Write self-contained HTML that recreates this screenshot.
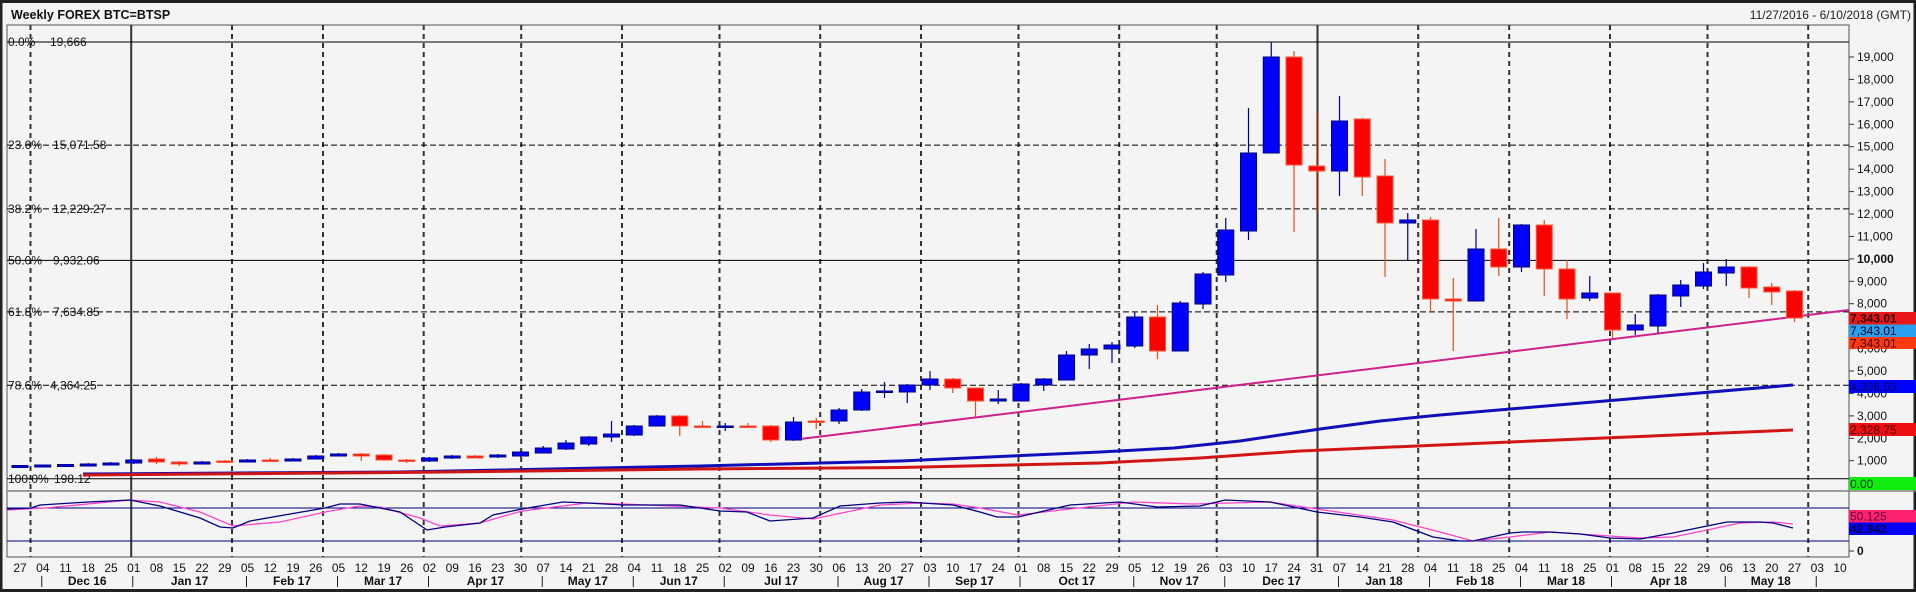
<!DOCTYPE html>
<html><head><meta charset="utf-8"><style>
html,body{margin:0;padding:0;background:#f0f0f0;}
svg{display:block;font-family:"Liberation Sans",sans-serif;}
</style></head><body>
<svg width="1916" height="592" viewBox="0 0 1916 592" xmlns="http://www.w3.org/2000/svg">
<defs><clipPath id="pc"><rect x="7" y="25" width="1842" height="532"/></clipPath></defs>
<rect x="0" y="0" width="1916" height="592" fill="#f4f4f4"/>
<rect x="1" y="1.5" width="1914" height="589" fill="none" stroke="#222" stroke-width="3"/>
<text x="11" y="19" font-size="12.5" font-weight="bold" fill="#111">Weekly FOREX BTC=BTSP</text>
<text x="1911" y="19" font-size="12" fill="#222" text-anchor="end">11/27/2016 - 6/10/2018 (GMT)</text>
<rect x="7" y="25" width="1842" height="532" fill="#f4f4f4" stroke="#555" stroke-width="1"/>
<g clip-path="url(#pc)">
<g stroke="#333" stroke-width="2" stroke-dasharray="5,4">
<line x1="30.5" y1="25" x2="30.5" y2="557"/><line x1="232" y1="25" x2="232" y2="557"/><line x1="323" y1="25" x2="323" y2="557"/><line x1="423.7" y1="25" x2="423.7" y2="557"/><line x1="521.2" y1="25" x2="521.2" y2="557"/><line x1="622" y1="25" x2="622" y2="557"/><line x1="719.5" y1="25" x2="719.5" y2="557"/><line x1="820.2" y1="25" x2="820.2" y2="557"/><line x1="921" y1="25" x2="921" y2="557"/><line x1="1018.5" y1="25" x2="1018.5" y2="557"/><line x1="1119.2" y1="25" x2="1119.2" y2="557"/><line x1="1216.7" y1="25" x2="1216.7" y2="557"/><line x1="1418.2" y1="25" x2="1418.2" y2="557"/><line x1="1509.2" y1="25" x2="1509.2" y2="557"/><line x1="1610" y1="25" x2="1610" y2="557"/><line x1="1707.5" y1="25" x2="1707.5" y2="557"/><line x1="1808.2" y1="25" x2="1808.2" y2="557"/>
</g>
<g stroke="#333" stroke-width="2"><line x1="131.2" y1="25" x2="131.2" y2="557"/><line x1="1317.5" y1="25" x2="1317.5" y2="557"/></g>
<g stroke="#000" stroke-width="1">
<line x1="7" y1="42" x2="1849" y2="42"/><line x1="7" y1="260.4" x2="1849" y2="260.4"/><line x1="7" y1="478.7" x2="1849" y2="478.7"/>
</g>
<g stroke="#000" stroke-width="1" stroke-dasharray="6,3">
<line x1="7" y1="145.1" x2="1849" y2="145.1"/><line x1="7" y1="208.9" x2="1849" y2="208.9"/><line x1="7" y1="311.9" x2="1849" y2="311.9"/><line x1="7" y1="385.2" x2="1849" y2="385.2"/>
</g>
<g font-size="12" fill="#111">
<text x="8" y="46">0.0%</text><text x="50" y="46">19,666</text>
<text x="8" y="149">23.6%</text><text x="53" y="149">15,071.58</text>
<text x="8" y="213">38.2%</text><text x="53" y="213">12,229.27</text>
<text x="8" y="264.5">50.0%</text><text x="53" y="264.5">9,932.06</text>
<text x="8" y="316">61.8%</text><text x="53" y="316">7,634.85</text>
<text x="8" y="389.5">78.6%</text><text x="50" y="389.5">4,364.25</text>
<text x="8" y="483">100.0%</text><text x="54" y="483">198.12</text>
</g>
<line x1="7" y1="491" x2="1849" y2="491" stroke="#808080" stroke-width="1.5"/>
<line x1="7" y1="508" x2="1849" y2="508" stroke="#000080" stroke-width="1"/>
<line x1="7" y1="541" x2="1849" y2="541" stroke="#000080" stroke-width="1"/>
<polyline fill="none" stroke="#1010b8" stroke-width="3" points="83,474 400,472 700,466 900,461 1100,452 1174,448 1240,441 1320,429 1380,421 1440,415 1793,385"/>
<polyline fill="none" stroke="#d01515" stroke-width="3" points="83,475 400,472.5 700,469 900,467.5 1100,463 1200,458 1300,451 1440,445 1793,430"/>
<line x1="792" y1="440" x2="1849" y2="310" stroke="#d0208a" stroke-width="2"/>
<polyline fill="none" stroke="#ff44cc" stroke-width="1.3" points="7,510 45,508 130,500 160,502 200,512 233,526 280,522 330,511 360,506 380,507 420,518 440,526 480,523 522,511 587,503 623,504 720,508 770,515 813,519 880,505 920,503 953,504 980,508 1018,515 1070,509 1133,502 1193,504 1270,502 1317,509 1393,520 1440,532 1473,541 1510,537 1550,532 1580,534 1610,536 1640,538 1673,537 1707,530 1740,523 1773,522 1793,524"/>
<polyline fill="none" stroke="#000080" stroke-width="1.3" points="7,509 31,508 40,505 88,502 130,500 160,506 200,518 220,527 233,528 250,521 290,514 325,508 340,504 360,504 400,512 427,530 445,527 480,523 493,515 522,509 563,502 587,503 623,505 680,505 720,511 747,512 770,521 813,518 840,506 880,503 907,502 953,505 980,512 997,517 1018,517 1070,505 1120,502 1157,507 1200,506 1225,500 1270,502 1317,512 1360,517 1393,522 1433,537 1460,541 1473,541 1510,533 1523,532 1550,532 1580,534 1610,538 1640,539 1673,533 1707,526 1727,522 1760,522 1773,523 1793,528"/>
<g>
<g stroke="#000080" stroke-width="1.2">
<line x1="20" y1="465" x2="20" y2="468"/><line x1="42.75" y1="465" x2="42.75" y2="467"/><line x1="65.5" y1="464" x2="65.5" y2="466"/><line x1="88.25" y1="463" x2="88.25" y2="466"/><line x1="111" y1="462" x2="111" y2="465"/><line x1="133.75" y1="459" x2="133.75" y2="464"/><line x1="202" y1="461" x2="202" y2="464"/><line x1="247.5" y1="459" x2="247.5" y2="462"/><line x1="293" y1="458" x2="293" y2="461"/><line x1="315.75" y1="455" x2="315.75" y2="459"/><line x1="338.5" y1="453" x2="338.5" y2="456"/><line x1="429.5" y1="457" x2="429.5" y2="462"/><line x1="452.25" y1="455" x2="452.25" y2="459"/><line x1="497.75" y1="454" x2="497.75" y2="458"/><line x1="520.5" y1="451" x2="520.5" y2="457"/><line x1="543.25" y1="446" x2="543.25" y2="453"/><line x1="566" y1="440" x2="566" y2="450"/><line x1="588.75" y1="436" x2="588.75" y2="446"/><line x1="611.5" y1="421" x2="611.5" y2="442"/><line x1="634.25" y1="425" x2="634.25" y2="436"/><line x1="657" y1="415" x2="657" y2="426"/><line x1="725.25" y1="423" x2="725.25" y2="431"/><line x1="793.5" y1="417" x2="793.5" y2="440"/><line x1="839" y1="408" x2="839" y2="424"/><line x1="861.75" y1="389" x2="861.75" y2="411"/><line x1="884.5" y1="382" x2="884.5" y2="398"/><line x1="907.25" y1="384" x2="907.25" y2="403"/><line x1="930" y1="371" x2="930" y2="390"/><line x1="998.25" y1="390" x2="998.25" y2="404"/><line x1="1021" y1="383" x2="1021" y2="401"/><line x1="1043.75" y1="378" x2="1043.75" y2="391"/><line x1="1066.5" y1="351" x2="1066.5" y2="380"/><line x1="1089.25" y1="344" x2="1089.25" y2="369"/><line x1="1112" y1="342" x2="1112" y2="363"/><line x1="1134.75" y1="312" x2="1134.75" y2="348"/><line x1="1180.25" y1="301" x2="1180.25" y2="351"/><line x1="1203" y1="272" x2="1203" y2="309"/><line x1="1225.75" y1="218" x2="1225.75" y2="282"/><line x1="1248.5" y1="108" x2="1248.5" y2="240"/><line x1="1271.25" y1="42" x2="1271.25" y2="153"/><line x1="1339.5" y1="96" x2="1339.5" y2="196"/><line x1="1407.75" y1="213" x2="1407.75" y2="260"/><line x1="1476" y1="229" x2="1476" y2="301"/><line x1="1521.5" y1="224" x2="1521.5" y2="272"/><line x1="1589.75" y1="276" x2="1589.75" y2="301"/><line x1="1635.25" y1="314" x2="1635.25" y2="335"/><line x1="1658" y1="294" x2="1658" y2="333"/><line x1="1680.75" y1="280" x2="1680.75" y2="307"/><line x1="1703.5" y1="263" x2="1703.5" y2="289"/><line x1="1726.25" y1="259" x2="1726.25" y2="286"/>
</g>
<g fill="#0000ff" stroke="#000080" stroke-width="1">
<rect x="12" y="465.5" width="16" height="2"/><rect x="34.75" y="465" width="16" height="2"/><rect x="57.5" y="464.5" width="16" height="2"/><rect x="80.25" y="464" width="16" height="2"/><rect x="103" y="463" width="16" height="2"/><rect x="125.75" y="460" width="16" height="3"/><rect x="194" y="462" width="16" height="2"/><rect x="239.5" y="460" width="16" height="2"/><rect x="285" y="459" width="16" height="2"/><rect x="307.75" y="456" width="16" height="3"/><rect x="330.5" y="454" width="16" height="2"/><rect x="421.5" y="458" width="16" height="3"/><rect x="444.25" y="456" width="16" height="2"/><rect x="489.75" y="455" width="16" height="2"/><rect x="512.5" y="452" width="16" height="4"/><rect x="535.25" y="448" width="16" height="5"/><rect x="558" y="443" width="16" height="6"/><rect x="580.75" y="437" width="16" height="7"/><rect x="603.5" y="434" width="16" height="3"/><rect x="626.25" y="426" width="16" height="9"/><rect x="649" y="416" width="16" height="10"/><rect x="717.25" y="426" width="16" height="1.5"/><rect x="785.5" y="422" width="16" height="18"/><rect x="831" y="410" width="16" height="11"/><rect x="853.75" y="392" width="16" height="18"/><rect x="876.5" y="391" width="16" height="1.5"/><rect x="899.25" y="385" width="16" height="7"/><rect x="922" y="379" width="16" height="6"/><rect x="990.25" y="399" width="16" height="2"/><rect x="1013" y="384" width="16" height="17"/><rect x="1035.75" y="379" width="16" height="6"/><rect x="1058.5" y="355" width="16" height="25"/><rect x="1081.25" y="349" width="16" height="6"/><rect x="1104" y="345" width="16" height="4"/><rect x="1126.75" y="317" width="16" height="29"/><rect x="1172.25" y="303" width="16" height="48"/><rect x="1195" y="274" width="16" height="30"/><rect x="1217.75" y="230" width="16" height="45"/><rect x="1240.5" y="153" width="16" height="78"/><rect x="1263.25" y="57" width="16" height="96"/><rect x="1331.5" y="121" width="16" height="50"/><rect x="1399.75" y="220" width="16" height="3"/><rect x="1468" y="249" width="16" height="52"/><rect x="1513.5" y="225" width="16" height="42"/><rect x="1581.75" y="293" width="16" height="5"/><rect x="1627.25" y="325" width="16" height="5"/><rect x="1650" y="295" width="16" height="31"/><rect x="1672.75" y="285" width="16" height="11"/><rect x="1695.5" y="272" width="16" height="14"/><rect x="1718.25" y="267" width="16" height="6"/>
</g>
<g stroke="#e05020" stroke-width="1.2">
<line x1="156.5" y1="457" x2="156.5" y2="464"/><line x1="179.25" y1="461" x2="179.25" y2="466"/><line x1="224.75" y1="460" x2="224.75" y2="463"/><line x1="270.25" y1="458" x2="270.25" y2="462"/><line x1="361.25" y1="453" x2="361.25" y2="461"/><line x1="384" y1="454" x2="384" y2="461"/><line x1="406.75" y1="459" x2="406.75" y2="463"/><line x1="475" y1="455" x2="475" y2="458"/><line x1="679.75" y1="415" x2="679.75" y2="436"/><line x1="702.5" y1="421" x2="702.5" y2="428"/><line x1="748" y1="423" x2="748" y2="427"/><line x1="770.75" y1="425" x2="770.75" y2="442"/><line x1="816.25" y1="418" x2="816.25" y2="429"/><line x1="952.75" y1="378" x2="952.75" y2="393"/><line x1="975.5" y1="388" x2="975.5" y2="417"/><line x1="1157.5" y1="305" x2="1157.5" y2="359"/><line x1="1294" y1="51" x2="1294" y2="232"/><line x1="1316.75" y1="113" x2="1316.75" y2="212"/><line x1="1362.25" y1="118" x2="1362.25" y2="196"/><line x1="1385" y1="159" x2="1385" y2="277"/><line x1="1430.5" y1="217" x2="1430.5" y2="312"/><line x1="1453.25" y1="278" x2="1453.25" y2="351"/><line x1="1498.75" y1="218" x2="1498.75" y2="276"/><line x1="1544.25" y1="220" x2="1544.25" y2="296"/><line x1="1567" y1="260" x2="1567" y2="319"/><line x1="1612.5" y1="293" x2="1612.5" y2="338"/><line x1="1749" y1="266" x2="1749" y2="298"/><line x1="1771.75" y1="283" x2="1771.75" y2="305"/><line x1="1794.5" y1="290" x2="1794.5" y2="322"/>
</g>
<g fill="#ff0000" stroke="#ff5a3a" stroke-width="1">
<rect x="148.5" y="459" width="16" height="3"/><rect x="171.25" y="462" width="16" height="2"/><rect x="216.75" y="461" width="16" height="1.5"/><rect x="262.25" y="460" width="16" height="1.5"/><rect x="353.25" y="454" width="16" height="2"/><rect x="376" y="455" width="16" height="5"/><rect x="398.75" y="460" width="16" height="1.5"/><rect x="467" y="456" width="16" height="2"/><rect x="671.75" y="416" width="16" height="10"/><rect x="694.5" y="426" width="16" height="1.5"/><rect x="740" y="426" width="16" height="1.5"/><rect x="762.75" y="426" width="16" height="14"/><rect x="808.25" y="421" width="16" height="1.5"/><rect x="944.75" y="379" width="16" height="9"/><rect x="967.5" y="388" width="16" height="13"/><rect x="1149.5" y="317" width="16" height="34"/><rect x="1286" y="57" width="16" height="108"/><rect x="1308.75" y="166" width="16" height="5"/><rect x="1354.25" y="119" width="16" height="58"/><rect x="1377" y="176" width="16" height="47"/><rect x="1422.5" y="220" width="16" height="79"/><rect x="1445.25" y="299" width="16" height="2"/><rect x="1490.75" y="249" width="16" height="18"/><rect x="1536.25" y="225" width="16" height="44"/><rect x="1559" y="269" width="16" height="30"/><rect x="1604.5" y="293" width="16" height="37"/><rect x="1741" y="267" width="16" height="21"/><rect x="1763.75" y="287" width="16" height="5"/><rect x="1786.5" y="291" width="16" height="27"/>
</g>
</g>
</g>
<line x1="1849" y1="491" x2="1916" y2="491" stroke="#808080" stroke-width="1.5"/>
<g stroke="#333" stroke-width="1">
<line x1="1849" y1="57" x2="1854" y2="57"/><line x1="1849" y1="79.4" x2="1854" y2="79.4"/><line x1="1849" y1="101.9" x2="1854" y2="101.9"/><line x1="1849" y1="124.3" x2="1854" y2="124.3"/><line x1="1849" y1="146.7" x2="1854" y2="146.7"/><line x1="1849" y1="169.2" x2="1854" y2="169.2"/><line x1="1849" y1="191.6" x2="1854" y2="191.6"/><line x1="1849" y1="214" x2="1854" y2="214"/><line x1="1849" y1="236.4" x2="1854" y2="236.4"/><line x1="1849" y1="258.9" x2="1854" y2="258.9"/><line x1="1849" y1="281.3" x2="1854" y2="281.3"/><line x1="1849" y1="303.7" x2="1854" y2="303.7"/><line x1="1849" y1="326.2" x2="1854" y2="326.2"/><line x1="1849" y1="348.6" x2="1854" y2="348.6"/><line x1="1849" y1="371" x2="1854" y2="371"/><line x1="1849" y1="393.4" x2="1854" y2="393.4"/><line x1="1849" y1="415.9" x2="1854" y2="415.9"/><line x1="1849" y1="438.3" x2="1854" y2="438.3"/><line x1="1849" y1="460.7" x2="1854" y2="460.7"/><line x1="1849" y1="551" x2="1854" y2="551"/>
</g>
<g font-size="12" fill="#111">
<text x="1857" y="61">19,000</text><text x="1857" y="83.4">18,000</text><text x="1857" y="105.9">17,000</text><text x="1857" y="128.3">16,000</text><text x="1857" y="150.7">15,000</text><text x="1857" y="173.2">14,000</text><text x="1857" y="195.6">13,000</text><text x="1857" y="218">12,000</text><text x="1857" y="240.4">11,000</text><text x="1857" y="262.9" font-weight="bold">10,000</text><text x="1857" y="285.3">9,000</text><text x="1857" y="307.7">8,000</text><text x="1857" y="330.2">7,000</text><text x="1857" y="352.6">6,000</text><text x="1857" y="375">5,000</text><text x="1857" y="397.4">4,000</text><text x="1857" y="419.9">3,000</text><text x="1857" y="442.3">2,000</text><text x="1857" y="464.7">1,000</text><text x="1857" y="555" font-weight="bold">0</text>
</g>
<g font-size="12">
<rect x="1849" y="312" width="67" height="12.5" fill="#e81818"/><text x="1850" y="322.5" fill="#300" font-weight="bold">7,343.01</text>
<rect x="1849" y="324.5" width="67" height="12.5" fill="#2aa0f0"/><text x="1850" y="335" fill="#002">7,343.01</text>
<rect x="1849" y="337" width="67" height="12" fill="#ff3a10"/><text x="1850" y="347.5" fill="#300">7,343.01</text>
<rect x="1849" y="380" width="67" height="13" fill="#0000ff"/><text x="1850" y="391" fill="#000050">4,306.03</text>
<rect x="1849" y="423" width="67" height="13" fill="#ee1010"/><text x="1850" y="434" fill="#400">2,328.75</text>
<rect x="1849" y="477" width="67" height="13" fill="#10ee10"/><text x="1850" y="488" fill="#030">0.00</text>
<rect x="1849" y="510" width="67" height="12.5" fill="#ff2070"/><text x="1850" y="520.5" fill="#600030">50.125</text>
<rect x="1849" y="522.5" width="67" height="12.5" fill="#0000ff"/><text x="1850" y="533" fill="#000040" font-weight="bold">42.842</text>
</g>
<g font-size="12" fill="#111" text-anchor="middle">
<text x="20" y="572">27</text><text x="42.75" y="572">04</text><text x="65.5" y="572">11</text><text x="88.25" y="572">18</text><text x="111" y="572">25</text><text x="133.75" y="572">01</text><text x="156.5" y="572">08</text><text x="179.25" y="572">15</text><text x="202" y="572">22</text><text x="224.75" y="572">29</text><text x="247.5" y="572">05</text><text x="270.25" y="572">12</text><text x="293" y="572">19</text><text x="315.75" y="572">26</text><text x="338.5" y="572">05</text><text x="361.25" y="572">12</text><text x="384" y="572">19</text><text x="406.75" y="572">26</text><text x="429.5" y="572">02</text><text x="452.25" y="572">09</text><text x="475" y="572">16</text><text x="497.75" y="572">23</text><text x="520.5" y="572">30</text><text x="543.25" y="572">07</text><text x="566" y="572">14</text><text x="588.75" y="572">21</text><text x="611.5" y="572">28</text><text x="634.25" y="572">04</text><text x="657" y="572">11</text><text x="679.75" y="572">18</text><text x="702.5" y="572">25</text><text x="725.25" y="572">02</text><text x="748" y="572">09</text><text x="770.75" y="572">16</text><text x="793.5" y="572">23</text><text x="816.25" y="572">30</text><text x="839" y="572">06</text><text x="861.75" y="572">13</text><text x="884.5" y="572">20</text><text x="907.25" y="572">27</text><text x="930" y="572">03</text><text x="952.75" y="572">10</text><text x="975.5" y="572">17</text><text x="998.25" y="572">24</text><text x="1021" y="572">01</text><text x="1043.75" y="572">08</text><text x="1066.5" y="572">15</text><text x="1089.25" y="572">22</text><text x="1112" y="572">29</text><text x="1134.75" y="572">05</text><text x="1157.5" y="572">12</text><text x="1180.25" y="572">19</text><text x="1203" y="572">26</text><text x="1225.75" y="572">03</text><text x="1248.5" y="572">10</text><text x="1271.25" y="572">17</text><text x="1294" y="572">24</text><text x="1316.75" y="572">31</text><text x="1339.5" y="572">07</text><text x="1362.25" y="572">14</text><text x="1385" y="572">21</text><text x="1407.75" y="572">28</text><text x="1430.5" y="572">04</text><text x="1453.25" y="572">11</text><text x="1476" y="572">18</text><text x="1498.75" y="572">25</text><text x="1521.5" y="572">04</text><text x="1544.25" y="572">11</text><text x="1567" y="572">18</text><text x="1589.75" y="572">25</text><text x="1612.5" y="572">01</text><text x="1635.25" y="572">08</text><text x="1658" y="572">15</text><text x="1680.75" y="572">22</text><text x="1703.5" y="572">29</text><text x="1726.25" y="572">06</text><text x="1749" y="572">13</text><text x="1771.75" y="572">20</text><text x="1794.5" y="572">27</text><text x="1817.25" y="572">03</text><text x="1840" y="572">10</text>
</g>
<g stroke="#222" stroke-width="1">
<line x1="41.75" y1="576" x2="41.75" y2="587"/><line x1="132.75" y1="576" x2="132.75" y2="587"/><line x1="246.5" y1="576" x2="246.5" y2="587"/><line x1="337.5" y1="576" x2="337.5" y2="587"/><line x1="428.5" y1="576" x2="428.5" y2="587"/><line x1="542.25" y1="576" x2="542.25" y2="587"/><line x1="633.25" y1="576" x2="633.25" y2="587"/><line x1="724.25" y1="576" x2="724.25" y2="587"/><line x1="838" y1="576" x2="838" y2="587"/><line x1="929" y1="576" x2="929" y2="587"/><line x1="1020" y1="576" x2="1020" y2="587"/><line x1="1133.75" y1="576" x2="1133.75" y2="587"/><line x1="1224.75" y1="576" x2="1224.75" y2="587"/><line x1="1338.5" y1="576" x2="1338.5" y2="587"/><line x1="1429.5" y1="576" x2="1429.5" y2="587"/><line x1="1520.5" y1="576" x2="1520.5" y2="587"/><line x1="1611.5" y1="576" x2="1611.5" y2="587"/><line x1="1725.25" y1="576" x2="1725.25" y2="587"/><line x1="1816.25" y1="576" x2="1816.25" y2="587"/>
</g>
<g font-size="12" font-weight="bold" fill="#111" text-anchor="middle">
<text x="87.25" y="585">Dec 16</text><text x="189.6" y="585">Jan 17</text><text x="292" y="585">Feb 17</text><text x="383" y="585">Mar 17</text><text x="485.4" y="585">Apr 17</text><text x="587.75" y="585">May 17</text><text x="678.75" y="585">Jun 17</text><text x="781.1" y="585">Jul 17</text><text x="883.5" y="585">Aug 17</text><text x="974.5" y="585">Sep 17</text><text x="1076.9" y="585">Oct 17</text><text x="1179.25" y="585">Nov 17</text><text x="1281.6" y="585">Dec 17</text><text x="1384" y="585">Jan 18</text><text x="1475" y="585">Feb 18</text><text x="1566" y="585">Mar 18</text><text x="1668.4" y="585">Apr 18</text><text x="1770.75" y="585">May 18</text>
</g>
</svg>
</body></html>
